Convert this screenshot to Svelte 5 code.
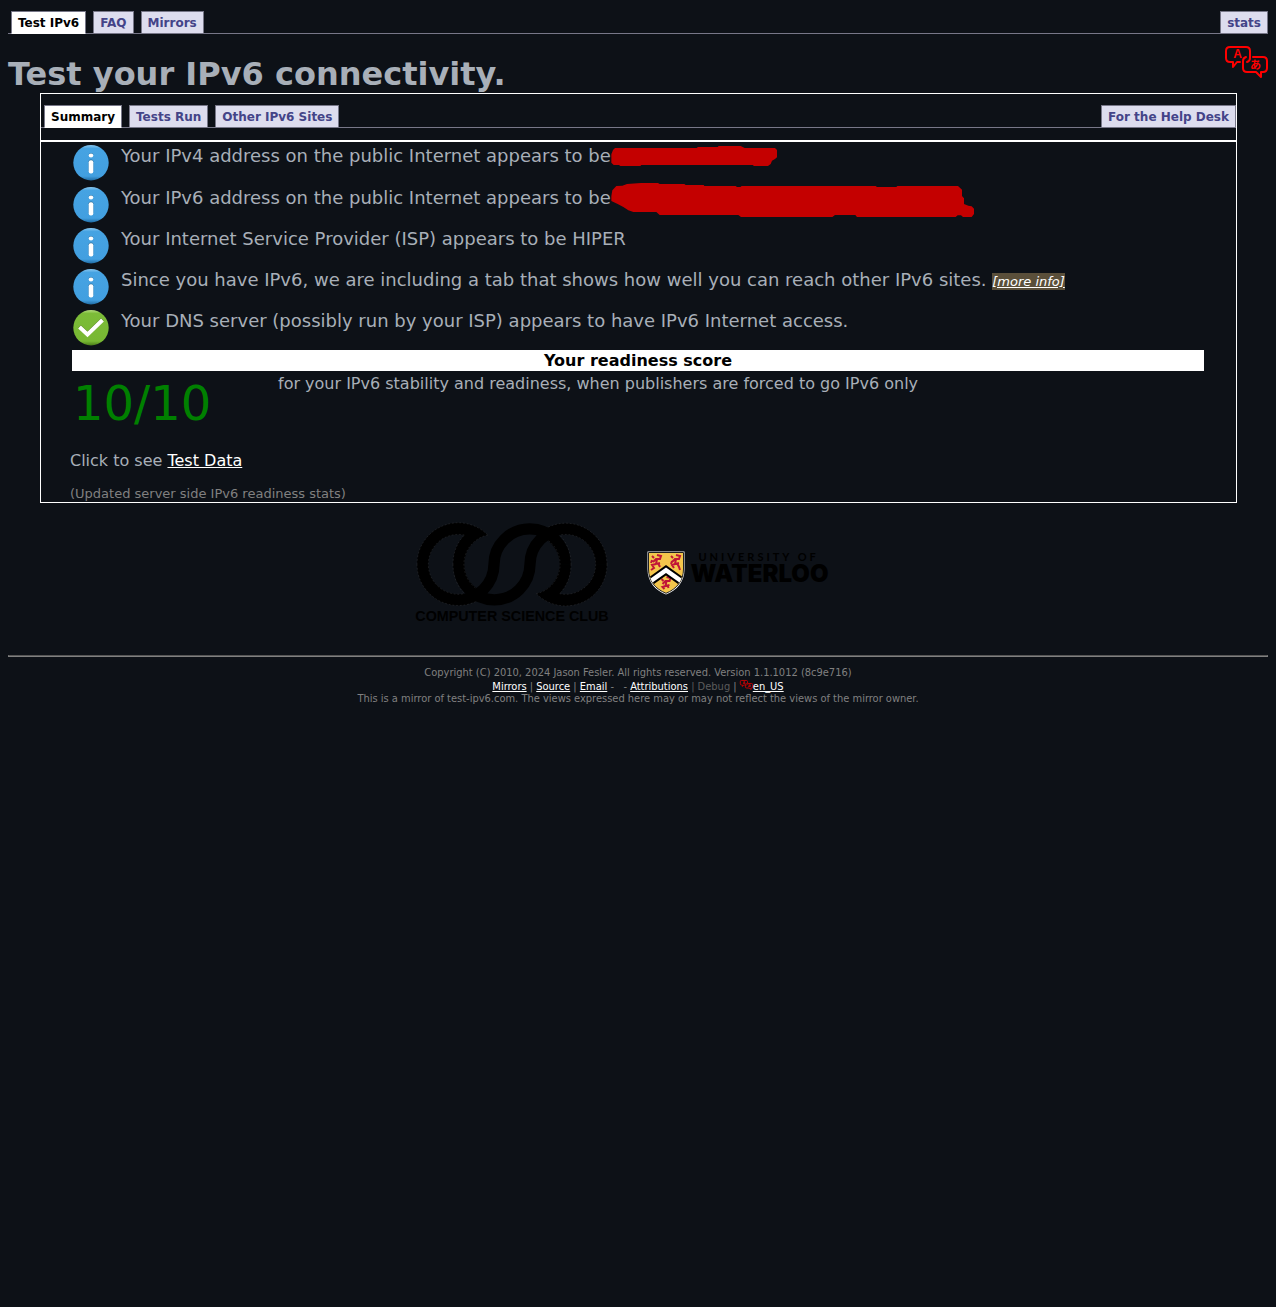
<script>
  const siteTabs = ['Test IPv6', 'FAQ', 'Mirrors'];
  const panelTabs = ['Summary', 'Tests Run', 'Other IPv6 Sites'];
  const results = [
    { kind: 'info', text: 'Your IPv4 address on the public Internet appears to be', mask: 'v4' },
    { kind: 'info', text: 'Your IPv6 address on the public Internet appears to be', mask: 'v6' },
    { kind: 'info', text: 'Your Internet Service Provider (ISP) appears to be HIPER' },
    {
      kind: 'info',
      text: 'Since you have IPv6, we are including a tab that shows how well you can reach other IPv6 sites.',
      more: true
    },
    { kind: 'ok', text: 'Your DNS server (possibly run by your ISP) appears to have IPv6 Internet access.' }
  ];
</script>

{#snippet language()}
  <svg class="language" viewBox="0 0 43 32" aria-hidden="true">
    <g fill="none" stroke="currentColor" stroke-linejoin="round" stroke-linecap="round">
      <path d="M15 16 L12 16 L8 21 V16 H5 Q1 16 1 12 V5 Q1 1 5 1 H21 Q25 1 25 5 V12 Q25 15 22 16" />
      <path d="M28 11 H38 Q42 11 42 15 V22 Q42 26 38 26 H36 V31 L31 26 H22 Q18 26 18 22 V15 Q18 12 21 11" />
    </g>
    <text class="latin" x="12.500" y="12" text-anchor="middle">A</text>
    <text class="kana" x="30.500" y="22.500" text-anchor="middle">あ</text>
  </svg>
{/snippet}

<div class="page">
  <nav class="tabs" aria-label="Site">
    {#each siteTabs as tab, i}
      <a href="#site-{i}" class:active={i === 0}>{tab}</a>
    {/each}
    <a href="#stats" class="end">stats</a>
  </nav>

  <header>
    <h1>Test your IPv6 connectivity.</h1>
    <a href="#language" class="pick" aria-label="Language">{@render language()}</a>
  </header>

  <main>
    <nav class="tabs" aria-label="Results">
      {#each panelTabs as tab, i}
        <a href="#panel-{i}" class:active={i === 0}>{tab}</a>
      {/each}
      <a href="#help" class="end">For the Help Desk</a>
    </nav>

    <section>
      <ul>
        {#each results as row}
          <li>
            <svg class="mark" viewBox="0 0 36 36" aria-hidden="true">
              <defs>
                <linearGradient id="blue" x1="0" y1="0" x2="0" y2="1">
                  <stop offset="0" stop-color="#8cc8f0" /><stop offset=".1" stop-color="#46a3e2" />
                  <stop offset=".88" stop-color="#429fe0" /><stop offset="1" stop-color="#206ca4" />
                </linearGradient>
                <linearGradient id="green" x1="0" y1="0" x2="0" y2="1">
                  <stop offset="0" stop-color="#b5dc80" /><stop offset=".1" stop-color="#7cbc38" />
                  <stop offset=".88" stop-color="#78b833" /><stop offset="1" stop-color="#4a7c18" />
                </linearGradient>
              </defs>
              {#if row.kind === 'info'}
                <circle cx="18" cy="17.700" r="17.700" fill="url(#blue)" />
                <ellipse cx="18" cy="10" rx="2.300" ry="2" fill="#2e719f" />
                <ellipse cx="18" cy="10.500" rx="2.300" ry="1.900" fill="#fff" />
                <rect x="15.600" y="14.500" width="4.800" height="13" rx="2" fill="#2e719f" />
                <rect x="15.700" y="15.200" width="4.600" height="13.300" rx="2" fill="#fff" />
              {:else}
                <circle cx="18" cy="17.700" r="17.700" fill="url(#green)" />
                <path d="M6.500 16.500 L14.500 24 L29.500 9.500" fill="none" stroke="#55831f" stroke-width="4" />
                <path d="M6.500 17 L14.500 24.500 L29.500 10" fill="none" stroke="#fff" stroke-width="4" />
              {/if}
            </svg>
            <p>
              {row.text}
              {#if row.more}<a href="#more" class="more">[more info]</a>{/if}
            </p>
            {#if row.mask === 'v4'}
              <svg class="mask v4" viewBox="33 30 501 60" aria-hidden="true">
                <path d="M45 36 H290 L294 33 H353 L356 30 H422 L434 36 H525 L531 42 V64 L525 69 L516 74 L512 84 L504 90 H462 L458 87 H124 L121 90 H61 L57 87 H41 L34 80 V55 L39 42Z" />
              </svg>
            {:else if row.mask === 'v6'}
              <svg class="mask v6" viewBox="36 141 1092 102" aria-hidden="true">
                <path d="M52 150 L70 149 L84 144 L126 141 H177 L182 144 H256 L260 147 H314 L316 150 H410 L414 153 H424 L428 150 H830 L834 153 H892 L895 150 H1077 L1089 161 V180 L1095 187 V204 L1108 209 L1118 211 L1125 218 V234 L1118 243 H1092 L1086 238 H1076 L1070 243 H774 L769 237 H708 L700 243 H426 L418 237 H182 L172 228 H103 L88 223 L73 213 L56 204 L37 195 V180 L40 163Z" />
              </svg>
            {/if}
          </li>
        {/each}
      </ul>

      <table>
        <thead>
          <tr><th colspan="2">Your readiness score</th></tr>
        </thead>
        <tbody>
          <tr>
            <td class="score">10/10</td>
            <td>for your IPv6 stability and readiness, when publishers are forced to go IPv6 only</td>
          </tr>
        </tbody>
      </table>

      <p class="data">Click to see <a href="#data">Test Data</a></p>
      <p class="note">(Updated server side IPv6 readiness stats)</p>
    </section>
  </main>

  <div class="sponsors">
    <a href="#csc" class="csc">
      <svg viewBox="36 38 594 303">
        <defs>
          <g id="rings">
            <path d="M48 165 A124 124 0 0 1 260 77 A90 90 0 0 0 190 165 H156 A124 124 0 0 1 190 77 A90 90 0 0 0 82 165Z" />
            <path transform="rotate(180 333 165)" d="M48 165 A124 124 0 0 1 260 77 A90 90 0 0 0 190 165 H156 A124 124 0 0 1 190 77 A90 90 0 0 0 82 165Z" />
            <path class="line" d="M65 164 A107 107 0 0 0 279 165 A107 107 0 0 1 493 166" />
            <path class="line" d="M173 164 A107 107 0 0 0 387 165 A107 107 0 0 1 601 166" />
          </g>
          <g id="rims" class="rims">
            <path d="M48 165 A124 124 0 0 1 260 77 M190 77 A90 90 0 0 0 82 165 A90 90 0 0 0 190 253 M48 165 A124 124 0 0 0 226 276 M156 165 A124 124 0 0 1 190 77 M260 77 A90 90 0 0 0 226 238 M156 165 A124 124 0 0 0 190 253" />
          </g>
        </defs>
        <use href="#rings" />
        <use href="#rims" />
        <use href="#rims" transform="rotate(180 333 165)" />
        <text x="333" y="336" text-anchor="middle">COMPUTER SCIENCE CLUB</text>
      </svg>
    </a>
    <a href="#uw" class="uw">
      <svg viewBox="0 0 38 44" aria-hidden="true">
        <path d="M.5 .5 H37.500 V18 C37.500 31 30 39 19 43.500 C8 39 .5 31 .5 18Z" fill="#fff" />
        <path d="M1.500 1.500 H36.500 V18 C36.500 30 29.500 38 19 42.300 C8.500 38 1.500 30 1.500 18Z" fill="#f4c64c" stroke="#222" stroke-width="1" />
        <g fill="none" stroke="#c01538" stroke-width="2">
          <path d="M5 5 l2 2 M10 4 l4 1 l-1 3 l-4 0 l-3 3 M10 8 l-1 5 l4 -1 M9 13 l-4 1 l2 3 l-3 2 M11 12 l2 4 M5 9 l-1 3" />
          <path transform="translate(20 0)" d="M4 5 l2 2 M9 4 l4 1 l-1 3 l-4 0 l-3 3 M9 8 l-1 5 l4 -1 M8 13 l-3 1 l2 3 M10 12 l2 4 l1 3 M5 10 l-1 3" />
          <path transform="translate(10.500 22)" d="M4 6 l2 2 M9 4 l4 1 l-1 3 l-4 0 l-3 3 M9 8 l-1 5 l4 -1 M8 13 l-3 1 l2 2 M10 12 l1 3" />
        </g>
        <path d="M3 25.500 L19 14 L35 25.500 L31 33 L19 24.500 L7 33Z" fill="#000" />
        <path d="M3.500 27.500 L19 16.500 L34.500 27.500 L32.500 31.500 L19 22 L5.500 31.500Z" fill="#fff" />
      </svg>
      <span class="name"><small>UNIVERSITY OF</small><b>WATERLOO</b></span>
    </a>
  </div>

  <hr />

  <footer>
    <p>Copyright (C) 2010, 2024 Jason Fesler. All rights reserved. Version 1.1.1012 (8c9e716)</p>
    <p class="links">
      <a href="#mirrors">Mirrors</a> | <a href="#source">Source</a> | <a href="#email">Email</a> - &nbsp; -
      <a href="#attributions">Attributions</a> <span class="dim">| Debug</span> | <a href="#locale"
        ><span class="small">{@render language()}</span>en_US</a>
    </p>
    <p>This is a mirror of test-ipv6.com. The views expressed here may or may not reflect the views of the mirror owner.</p>
  </footer>
</div>

<style>
  :global(body) {
    margin: 0;
    background: #0d1117;
  }
  .page {
    padding: 11px 8px;
    font: 16px/19px 'DejaVu Sans', sans-serif;
    color: #a8afb8;
  }
  h1, p, ul {
    margin: 0;
    padding: 0;
  }
  a {
    color: #fff;
  }
  .tabs {
    display: flex;
    gap: 7px;
    padding-left: 3px;
    border-bottom: 1px solid #778;
  }
  .tabs a {
    margin-bottom: -1px;
    padding: 2px 6px 0;
    border: 1px solid #778;
    background: #dde;
    color: #448;
    font-size: 12px;
    font-weight: bold;
    line-height: 19px;
    text-decoration: none;
  }
  .tabs a.active {
    border-bottom-color: #fff;
    background: #fff;
    color: #000;
  }
  .tabs .end {
    margin-left: auto;
  }
  header {
    display: flex;
    justify-content: space-between;
    align-items: flex-start;
    padding-top: 12px;
  }
  h1 {
    padding-top: 10px;
    font-size: 32px;
    line-height: 37px;
  }
  .pick {
    color: #f00;
    line-height: 0;
  }
  .language {
    width: 43px;
    height: 32px;
    overflow: visible;
    stroke-width: 2px;
  }
  .language text {
    fill: currentColor;
    font: bold 12px 'Liberation Sans', sans-serif;
  }
  .language .kana {
    font: bold 11px 'Noto Sans CJK JP', sans-serif;
  }
  main {
    margin: 0 31px 0 32px;
    padding-top: 11px;
    border: 1px solid #fff;
  }
  section {
    margin-top: 12px;
    padding: 0 30px 0 29px;
    border-top: 2px solid #fff;
  }
  li {
    display: flex;
    align-items: flex-start;
    height: 41px;
    padding-left: 3px;
    font-size: 18px;
    line-height: 22px;
  }
  li:first-child {
    height: 42px;
  }
  li p {
    padding-top: 3px;
  }
  .mark {
    flex: none;
    width: 36px;
    height: 36px;
    margin: 3px 12px 0 0;
  }
  .more {
    padding: 1px 0;
    background: #5a4f3a;
    font-size: 13px;
    font-style: italic;
  }
  .mask {
    flex: none;
    fill: #c40000;
  }
  .v4 {
    width: 167px;
    height: 20px;
    margin-top: 4px;
  }
  .v6 {
    width: 364px;
    height: 34px;
    margin-top: -1px;
  }
  table {
    width: 100%;
    border-spacing: 2px;
  }
  th {
    padding: 1px;
    background: #fff;
    color: #000;
  }
  td {
    padding: 1px;
    vertical-align: top;
  }
  .score {
    width: 201px;
    color: #008000;
    font-size: 48px;
    line-height: 58px;
  }
  .data {
    margin-top: 16px;
  }
  .note {
    margin-top: 16px;
    color: #808080;
    font-size: 13px;
    line-height: 16px;
  }
  .sponsors {
    display: flex;
    justify-content: center;
    gap: 36px;
    padding: 19px 34px 32px 0;
  }
  .csc svg {
    display: block;
    width: 198px;
    height: 101px;
  }
  .csc text {
    font: bold 43px 'Liberation Sans', sans-serif;
  }
  .line {
    fill: none;
    stroke: #000;
    stroke-width: 34;
  }
  .rims {
    fill: none;
    stroke: #4a4a4c;
    stroke-width: 1;
    stroke-dasharray: 5 6;
  }
  .uw {
    display: flex;
    align-items: flex-start;
    gap: 5px;
    padding-top: 29px;
    color: #000;
    text-decoration: none;
  }
  .uw svg {
    width: 38px;
    height: 44px;
  }
  .name {
    display: flex;
    flex-direction: column;
    font-family: Inter, sans-serif;
  }
  .name small {
    padding-left: 8px;
    font-family: Lato, sans-serif;
    font-size: 11px;
    font-weight: bold;
    line-height: 12px;
    letter-spacing: 3px;
  }
  .name b {
    font-size: 24px;
    font-weight: 900;
    line-height: 22px;
  }
  hr {
    height: 0;
    margin: 0 0 10px;
    border: 1px solid #808080;
    border-top-color: #555;
  }
  footer {
    color: #808080;
    font: 11px/12px 'DejaVu Sans Condensed', 'DejaVu Sans', sans-serif;
    font-stretch: condensed;
    text-align: center;
  }
  .links {
    padding-top: 1px;
  }
  .dim {
    color: #5c5c5c;
  }
  .small {
    color: #d00000;
  }
  .small :global(svg) {
    width: 13px;
    height: 10px;
    stroke-width: 3px;
  }
</style>
